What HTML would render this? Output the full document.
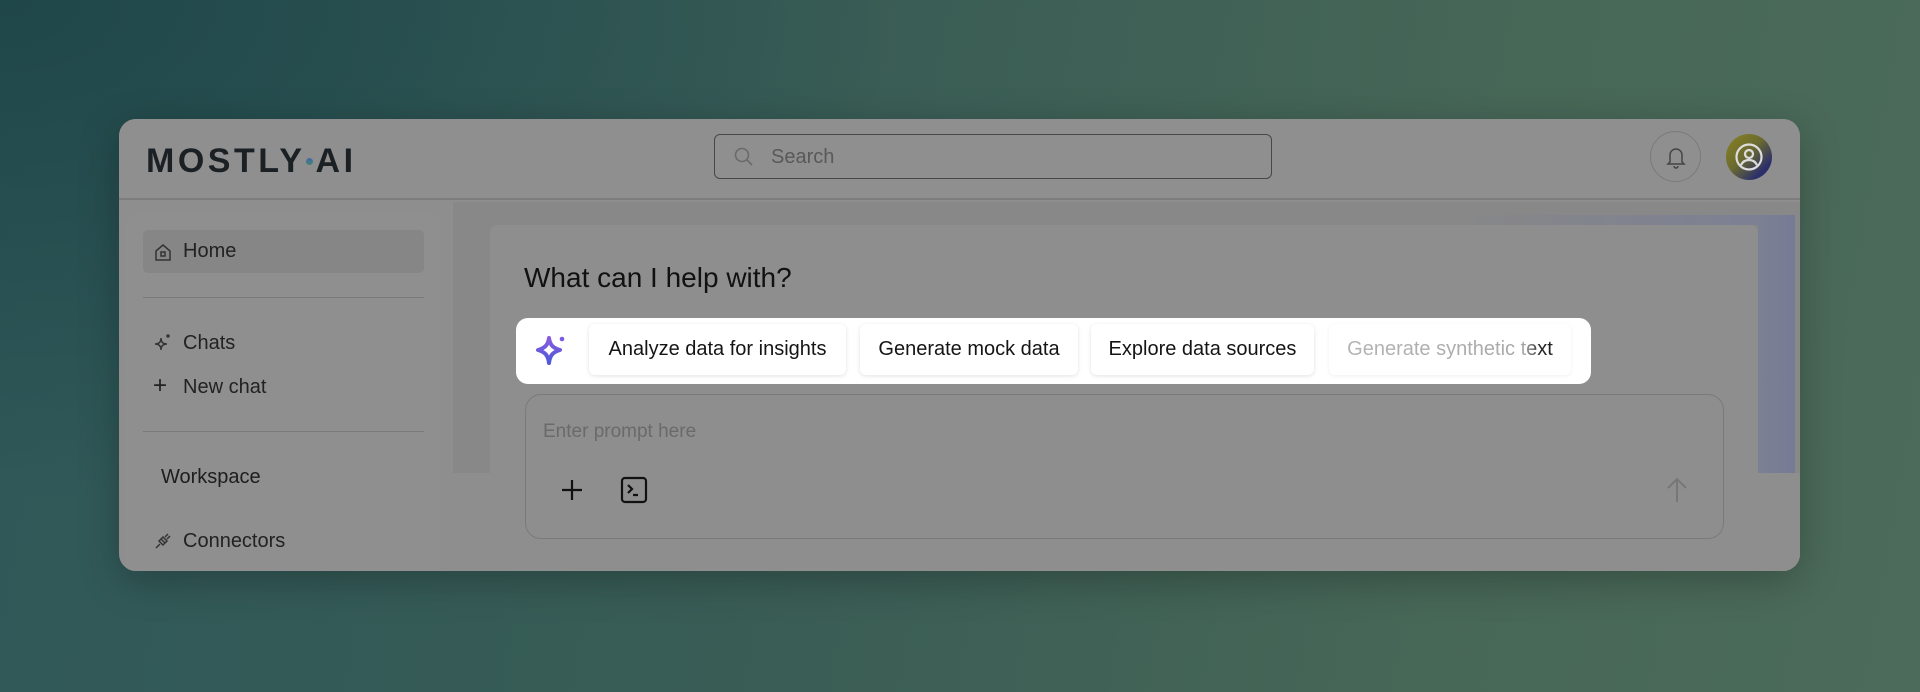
<!DOCTYPE html>
<html><head><meta charset="utf-8"><style>
*{box-sizing:border-box;margin:0;padding:0}
body{width:1920px;height:692px;overflow:hidden;font-family:"Liberation Sans",Arial,sans-serif;
background:radial-gradient(ellipse 900px 500px at 0% 0%,#1f4649 0%,rgba(31,70,73,0) 100%),linear-gradient(100deg,#2f5859 0%,#3a5d55 45%,#476757 75%,#4c6b5a 100%);position:relative}
.win{position:absolute;left:119px;top:119px;width:1681px;height:452px;border-radius:17px;background:#8e8e8e;overflow:hidden;box-shadow:0 10px 40px rgba(0,0,0,.25)}
.hdr{position:absolute;left:0;top:0;right:0;height:81px;background:#8f8f8f;border-bottom:2px solid #7d7d7d}
.logo{position:absolute;left:27px;top:23px;font-size:34px;font-weight:700;letter-spacing:3.5px;color:#1b2024}
.logo .dot{display:inline-block;width:7px;height:7px;border-radius:50%;background:linear-gradient(#4a63a8,#3c8a70);vertical-align:middle;margin:0 3px 4px 0}
.search{position:absolute;left:595px;top:15px;width:558px;height:45px;border:1.5px solid #474747;border-radius:6px}
.search span{position:absolute;left:56px;top:11px;font-size:20px;color:#595959}
.bell{position:absolute;left:1531px;top:12px;width:51px;height:51px;border:1.5px solid #7a7a7a;border-radius:50%}
.av{position:absolute;left:1607px;top:15px;width:46px;height:46px;border-radius:50%;background:linear-gradient(135deg,#8a8220 0%,#6a6a30 45%,#2b2f6a 80%)}
.side{position:absolute;left:7px;top:94px;width:315px;height:380px;background:#8f8f8f;border-radius:10px}
.main{position:absolute;left:334px;top:83px;right:0;bottom:0;background:#888888}
.main .low{position:absolute;left:0;right:0;top:271px;bottom:0;background:#8e8e8e}
.purp{position:absolute;left:1305px;top:13px;width:37px;height:258px;background:linear-gradient(90deg,#7c8093,#767b94)}
.purpt{position:absolute;left:1000px;top:13px;width:342px;height:10px;background:linear-gradient(90deg,rgba(122,127,147,0),#7a7f94)}
.card{position:absolute;left:371px;top:106px;width:1268px;height:360px;background:#8e8e8e;border-radius:8px}
.item{position:absolute;font-size:20px;color:#222}
.sep{position:absolute;left:17px;width:281px;height:1px;background:#7a7a7a}
h1{position:absolute;left:524px;top:262px;font-size:28px;font-weight:400;color:#111}
.hl{position:absolute;left:516px;top:318px;width:1075px;height:66px;background:#fff;border-radius:12px}
.chip{position:absolute;top:6px;height:51px;background:#fff;border-radius:6px;box-shadow:0 1px 4px rgba(0,0,0,.12);font-size:20px;color:#151515;text-align:center;line-height:51px;white-space:nowrap}
.prompt{position:absolute;left:525px;top:394px;width:1199px;height:145px;border:1.5px solid #7a7a7a;border-radius:16px}
.prompt .ph{position:absolute;left:17px;top:26px;font-size:19px;color:#6a6a6a}
</style></head><body>
<div class="win">
 <div class="main"><div class="low"></div><div class="purpt"></div><div class="purp"></div></div>
 <div class="card"></div>
 <div class="hdr">
  <div class="logo">MOSTLY<span class="dot"></span>AI</div>
  <div class="search"><svg style="position:absolute;left:18px;top:11px" width="22" height="22" viewBox="0 0 22 22" fill="none" stroke="#6a6a6a" stroke-width="1.6"><circle cx="9" cy="9" r="6.5"/><path d="M14 14l5 5"/></svg><span>Search</span></div>
  <div class="bell"><svg style="position:absolute;left:14px;top:13px" width="22" height="24" viewBox="0 0 22 24" fill="none" stroke="#454545" stroke-width="1.5"><path d="M5 17V10a6 6 0 0112 0v7l2 2H3z"/><path d="M9 21a2 2 0 004 0"/></svg></div>
  <div class="av"><svg style="position:absolute;left:8px;top:8px" width="30" height="30" viewBox="0 0 30 30" fill="none" stroke="#ddd" stroke-width="2.2"><circle cx="15" cy="15" r="12.5"/><circle cx="15" cy="12" r="4"/><path d="M7 23c2-4 5-5 8-5s6 1 8 5"/></svg></div>
 </div>
 <div class="side">
  <div style="position:absolute;left:17px;top:17px;width:281px;height:43px;background:#868686;border-radius:5px"></div>
  <svg style="position:absolute;left:27px;top:29px" width="20" height="20" viewBox="0 0 20 20" fill="none" stroke="#333" stroke-width="1.5"><path d="M3 9l7-6 7 6v9H3z"/><rect x="8" y="10" width="4" height="4"/></svg>
  <div class="item" style="left:57px;top:27px">Home</div>
  <div class="sep" style="top:84px"></div>
  <svg style="position:absolute;left:27px;top:120px" width="18" height="20" viewBox="0 0 18 20" fill="none" stroke="#333" stroke-width="1.5"><path d="M8 5c0 4 2 6 6 6-4 0-6 2-6 6 0-4-2-6-6-6 4 0 6-2 6-6z"/><circle cx="15" cy="3" r="1" fill="#333"/></svg>
  <div class="item" style="left:57px;top:119px">Chats</div>
  <div class="item" style="left:27px;top:161px;font-size:24px;line-height:24px">+</div>
  <div class="item" style="left:57px;top:163px">New chat</div>
  <div class="sep" style="top:218px"></div>
  <div class="item" style="left:35px;top:253px;color:#1d1d1d">Workspace</div>
  <svg style="position:absolute;left:27px;top:318px" width="20" height="20" viewBox="0 0 20 20" fill="none" stroke="#333" stroke-width="1.5"><path d="M3 17l4-4M8 8l4 4M6 10l4-4 4 4-4 4zM12 6l3-3M14 8l3-3"/></svg>
  <div class="item" style="left:57px;top:317px">Connectors</div>
 </div>
</div>
<h1>What can I help with?</h1>
<div class="hl">
 <svg style="position:absolute;left:20px;top:16px" width="32" height="34" viewBox="0 0 32 34"><defs><linearGradient id="g" x1="0" y1="0" x2="0" y2="1"><stop offset="0" stop-color="#8a5ae0"/><stop offset="1" stop-color="#4c5ad8"/></linearGradient></defs><path d="M13 4c1 7 4 10 11 12-7 2-10 5-11 13-1-8-4-11-11-13 7-2 10-5 11-12z" fill="none" stroke="url(#g)" stroke-width="4" stroke-linejoin="round"/><circle cx="26" cy="5" r="2.3" fill="#7a5ae0"/></svg>
 <div class="chip" style="left:73px;width:257px">Analyze data for insights</div>
 <div class="chip" style="left:344px;width:218px">Generate mock data</div>
 <div class="chip" style="left:575px;width:223px">Explore data sources</div>
 <div class="chip" style="left:813px;width:242px;box-shadow:0 1px 4px rgba(0,0,0,.06)"><span style="background:linear-gradient(90deg,#b4b4b4 0%,#a8a8a8 86%,#222 94%);-webkit-background-clip:text;background-clip:text;color:transparent">Generate synthetic text</span></div>
</div>
<div class="prompt">
 <div class="ph">Enter prompt here</div>
 <svg style="position:absolute;left:34px;top:83px" width="24" height="24" viewBox="0 0 24 24" stroke="#111" stroke-width="2.2"><path d="M12 2v20M2 12h20"/></svg>
 <svg style="position:absolute;left:94px;top:81px" width="28" height="28" viewBox="0 0 28 28" fill="none" stroke="#111" stroke-width="2.2"><rect x="2" y="2" width="24" height="24" rx="3"/><path d="M8 9l4 4-4 4M13 19h5"/></svg>
 <svg style="position:absolute;left:1139px;top:81px" width="24" height="28" viewBox="0 0 24 28" fill="none" stroke="#777" stroke-width="2"><path d="M12 26V3M3 12l9-9 9 9"/></svg>
</div>
</body></html>
